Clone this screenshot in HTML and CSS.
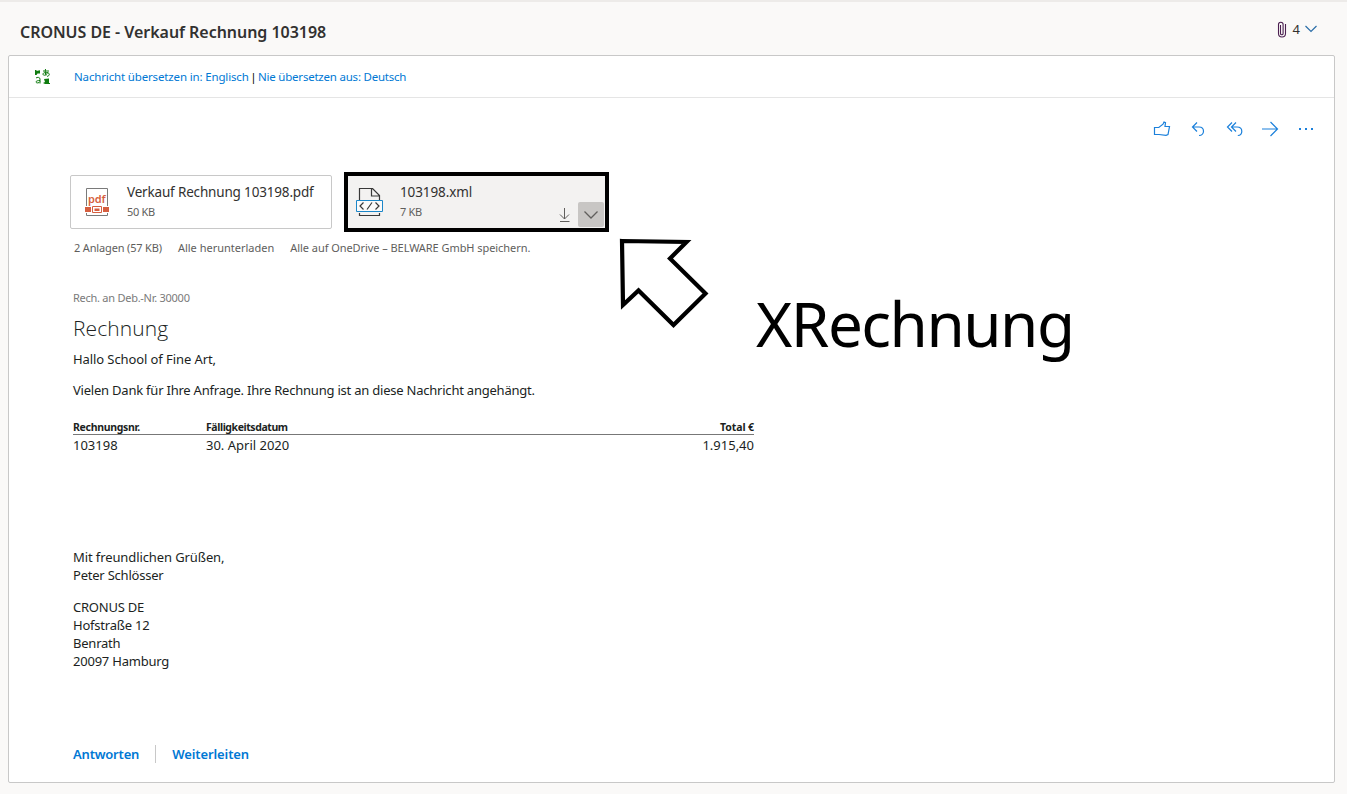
FILE: index.html
```html
<!DOCTYPE html>
<html lang="de">
<head>
<meta charset="utf-8">
<title>CRONUS DE - Verkauf Rechnung 103198</title>
<link rel="stylesheet" href="styles.css">
</head>
<body>
<header class="subject">
  <h1 class="subject-title">CRONUS DE - Verkauf Rechnung 103198</h1>
  <div class="attach-count">
    <svg class="clip" width="10" height="17" viewBox="0 0 10 17"><path d="M3.500 4v8.500a1.300 1.300 0 0 0 2.600 0V3.500a2.300 2.300 0 0 0-4.600 0v9a3.400 3.400 0 0 0 7 0V3"/></svg>
    <span class="count">4</span>
    <svg class="chev" width="14" height="8" viewBox="0 0 14 8"><path d="M1.500 1l5.500 5.500L12.500 1"/></svg>
  </div>
</header>
<main class="message">
  <div class="translate-bar">
    <svg class="translate-icon" width="16" height="16" viewBox="0 0 16 16">
      <path class="fill" d="M0 1h1.500v1L5 1.200V4.500L2.500 4.500 1.500 6H0zM9 10l5-.5V14h1v1h-5l-2-1 2-1z"/>
      <path d="M8 2h6M10.500 0c-.5 3 0 5 .5 6.500M13 3c-1 3-5 4.500-5 2 0-2 6-2 6.300.2 0 1.300-1 2-2.300 2.200M1 9c1-1 4-1 4 1V14.500M5 11.500c-2 0-4 .3-4 1.500S4 14.500 5 12.500"/>
    </svg>
    <p class="translate-text"><a class="w1">Nachricht übersetzen in: Englisch</a><span class="bar">|</span><a class="w2">Nie übersetzen aus: Deutsch</a></p>
  </div>
  <nav class="actions">
    <svg width="18" height="16" viewBox="0 0 18 16"><path d="M1.500 6.500h4.300L10 3.200l1-2.200 1.500.7-.5 3.800h4.500L15 13.500l-2 .8-7-.8H1.500z"/></svg>
    <svg width="18" height="16" viewBox="-1 0 18 16"><path d="M7 1.500L2.500 6 7 10.500M2.500 6H9c3 0 4.500 2 4.500 4.300 0 2-1.500 4.200-4.500 4.200"/></svg>
    <svg width="18" height="16" viewBox="-1 0 18 16"><path d="M6 1.500L1.500 6 6 10.500M10 1.500L5.500 6l4.500 4.500M5.500 6H11c3 0 4.800 2 4.800 4.300 0 2-1.300 4.200-4 4.200"/></svg>
    <svg width="18" height="16" viewBox="0 0 18 16"><path d="M1 8h15.500M9.500 1l7 7-7 7"/></svg>
    <svg width="18" height="16" viewBox="-1 0 18 16"><path class="dots" d="M1 7h2v2H1zM7 7h2v2H7zM13 7h2v2h-2z"/></svg>
  </nav>
  <section class="attachments">
    <article class="card">
      <svg class="file-icon" width="24" height="29" viewBox="0 0 24 29">
        <path class="grey" d="M1.500 18V.5h21V18M1.500 25v2.500h21V25"/>
        <text class="pdf" x="3" y="15" textLength="17.500">pdf</text>
        <path class="red" d="M0 19h6v5H0zM18 19h6v5h-6z"/><path class="redline" d="M7.500 18.500h9v6h-9z"/><path class="red" d="M9.500 20.500h5v2.500h-5z"/>
      </svg>
      <div class="file-meta"><span class="file-name n1">Verkauf Rechnung 103198.pdf</span><span class="file-size">50 KB</span></div>
    </article>
    <article class="card selected">
      <svg class="file-icon xml" width="27" height="29" viewBox="0 0 27 29">
        <path class="dark" d="M3.500 12V.500H16.500l7 7V12M15.500.500V8h8M3.500 25v2.500h20V25"/>
        <path class="blue" d="M.500 12.500h26v11H.500z"/>
        <path class="dark" d="M7.500 14.500L4 18l3.500 3.500M19.500 14.500L23 18l-3.500 3.500M16 14.500l-5 7"/>
      </svg>
      <div class="file-meta"><span class="file-name n2">103198.xml</span><span class="file-size">7 KB</span></div>
      <svg class="download" width="11" height="15" viewBox="0 0 11 15"><path d="M5.500 0v11M1 6.500L5.500 11 10 6.500M1 13.500h9.500"/></svg>
      <span class="drop"><svg width="14" height="8" viewBox="0 0 14 8"><path d="M.500.500L7 7l6.500-6.500"/></svg></span>
    </article>
  </section>
  <p class="attach-links"><span class="l1">2 Anlagen (57 KB)</span><a class="l2">Alle herunterladen</a><a class="l3">Alle auf OneDrive – BELWARE GmbH speichern.</a></p>
  <section class="letter">
    <p class="ref">Rech. an Deb.-Nr. 30000</p>
    <h2 class="letter-title">Rechnung</h2>
    <p class="line greet">Hallo School of Fine Art,</p>
    <p class="line thanks">Vielen Dank für Ihre Anfrage. Ihre Rechnung ist an diese Nachricht angehängt.</p>
    <div class="table">
      <div class="row head"><span class="h1c">Rechnungsnr.</span><span class="h2c">Fälligkeitsdatum</span><span class="amount">Total €</span></div>
      <div class="row"><span>103198</span><span>30. April 2020</span><span class="amount">1.915,40</span></div>
    </div>
    <div class="closing"><p class="c1">Mit freundlichen Grüßen,</p><p class="c2">Peter Schlösser</p></div>
    <address class="sender"><span>CRONUS DE</span><span>Hofstraße 12</span><span>Benrath</span><span>20097 Hamburg</span></address>
  </section>
  <footer class="reply"><a class="r1">Antworten</a><a class="r2">Weiterleiten</a></footer>
</main>
<svg class="callout-arrow" width="92" height="92" viewBox="0 0 92 92"><path d="M4 5l64.500 1L52 22.500l35.500 35L55.500 89 20.500 54.500 5 69z"/></svg>
<div class="callout-text">XRechnung</div>
</body>
</html>
```
FILE: styles.css
```css
* { box-sizing: border-box; }
body, p, h1, h2 { margin: 0; }
svg { display: block; fill: none; flex: none; }
body {
  position: relative; height: 794px; overflow: hidden; padding: 0 12px 0 8px;
  background: #faf9f8; border-top: 2px solid #edebe9;
  font-family: "Noto Sans", "Open Sans", sans-serif; color: #201f1e; white-space: nowrap;
}
.subject { display: flex; justify-content: space-between; height: 53px; padding: 0 17px 0 12px; }
.subject-title { font-size: 16px; line-height: 24px; margin-top: 18px; font-weight: 600; color: #323130; letter-spacing: -.04px; }
.attach-count { display: flex; align-items: center; height: 20px; margin-top: 17px; font-size: 13px; }
.clip { stroke: #4b1f50; stroke-width: 1.1; margin-right: 6px; }
.count { margin-right: 4px; color: #323130; }
.chev { stroke: #2b6ea8; stroke-width: 1.2; }
.message { display: flex; flex-direction: column; height: 728px; background: #fff; border: 1px solid #c8c8c8; border-radius: 2px; }
.translate-bar { display: flex; height: 42px; border-bottom: 1px solid #e5e5e5; padding-left: 26px; flex: none; }
.translate-icon { margin-top: 13px; stroke: #107c10; }
.translate-icon .fill { fill: #107c10; stroke: none; }
.translate-text { margin-left: 23px; font-size: 11.5px; line-height: 18px; margin-top: 12px; color: #0078d4; }
.w1 { letter-spacing: -.15px; }
.w2 { letter-spacing: -.22px; }
.bar { color: #000; margin: 0 1.5px; }
.actions { display: flex; gap: 18px; margin: 23px 0 0 1144px; stroke: #1b80db; stroke-width: 1.2; }
.dots { fill: #1b80db; stroke: none; }
.attachments { display: flex; align-items: flex-start; margin: 35px 0 0 61px; gap: 12px; }
.card { display: flex; position: relative; width: 262px; height: 54px; margin-top: 3px; border: 1px solid #c8c8c8; border-radius: 2px; padding: 12px 0 0 14px; }
.file-icon { width: 24px; }
.file-meta { margin-left: 18px; margin-top: -7px; display: flex; flex-direction: column; }
.file-name { font-size: 13.5px; line-height: 23px; color: #323130; letter-spacing: -.17px; }
.n2 { letter-spacing: -.1px; }
.file-size { font-size: 11px; line-height: 16px; color: #605e5c; letter-spacing: -.3px; }
.grey { stroke: #7a7a7a; }
.pdf { font-size: 11px; font-weight: 600; fill: #d65f40; }
.red { fill: #d65f40; }
.redline { stroke: #d65f40; }
.selected { width: 265px; height: 60px; margin-top: 0; border: 4px solid #000; border-radius: 0; background: #f3f2f1; padding: 12px 0 0 8px; }
.selected .file-icon { width: 27px; }
.selected .file-meta { margin-left: 17px; margin-top: -7px; }
.dark { stroke: #383838; stroke-width: 1.2; }
.blue { stroke: #1b86c8; fill: #fafafa; }
.download { position: absolute; left: 211px; top: 32px; stroke: #605e5c; }
.drop { position: absolute; right: 1px; bottom: 1px; width: 26px; height: 25px; background: #c8c6c4; border-radius: 2px; display: grid; place-items: center; stroke: #605e5c; stroke-width: 1.3; }
.attach-links { display: flex; gap: 16px; margin: 8px 0 0 65px; font-size: 11px; line-height: 16px; color: #605e5c; }
.l1 { letter-spacing: -.16px; }
.l3 { letter-spacing: -.06px; }
.letter { margin: 34px 0 0 64px; width: 681px; font-size: 13px; line-height: 18px; }
.ref { font-size: 11px; line-height: 16px; color: #7a7a7a; letter-spacing: -.26px; }
.letter-title { font-family: "Open Sans", sans-serif; font-size: 21px; font-weight: 300; line-height: 28px; margin-top: 8px; letter-spacing: .1px; }
.greet { margin-top: 8px; letter-spacing: -.09px; }
.thanks { margin-top: 13px; letter-spacing: -.22px; }
.table { margin-top: 21px; }
.row { display: grid; grid-template-columns: 133px 1fr 100px; height: 20px; padding-top: 1px; }
.head { font-size: 10.5px; font-weight: 700; line-height: 14px; height: 15px; border-bottom: 1px solid #777; padding: 0; }
.h1c { letter-spacing: -.3px; }
.h2c { letter-spacing: -.42px; }
.head .amount { letter-spacing: -.1px; }
.row > span { justify-self: start; }
.row > .amount { justify-self: end; }
.closing { margin-top: 93px; }
.c1 { letter-spacing: -.1px; }
.c2, .sender { letter-spacing: -.22px; }
.sender { display: flex; flex-direction: column; font-style: normal; margin-top: 14px; }
.reply { display: flex; margin: 75px 0 0 64px; font-size: 13px; line-height: 18px; font-weight: 600; color: #0078d4; }
.r1 { border-right: 1px solid #c8c8c8; padding-right: 16px; letter-spacing: -.2px; }
.r2 { margin-left: 16px; letter-spacing: -.1px; }
.callout-arrow { position: absolute; left: 618px; top: 234px; stroke: #000; stroke-width: 4.2; }
.callout-text { position: absolute; left: 756px; top: 278px; font-size: 62px; line-height: 86px; letter-spacing: -1.5px; color: #000; }
```
